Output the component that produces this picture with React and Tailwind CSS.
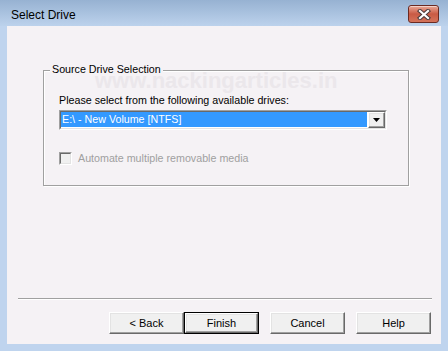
const raised =
  "bg-[#f0f0f0] border border-t-white border-l-white border-b-[#696969] border-r-[#696969] shadow-[inset_-1px_-1px_0_#a0a0a0,inset_1px_1px_0_#e3e3e3]";

function DialogButton({ label, isDefault }) {
  if (isDefault) {
    return (
      <div className="w-[75px] h-[22px] border border-black">
        <button className={`w-full h-full flex items-center justify-center text-[11px] leading-[13px] text-black ${raised}`}>
          {label}
        </button>
      </div>
    );
  }
  return (
    <button className={`w-[75px] h-[22px] flex items-center justify-center text-[11px] leading-[13px] text-black ${raised}`}>
      {label}
    </button>
  );
}

export default function App() {
  return (
    <div className="w-[448px] h-[351px] bg-[#bfd4ee] flex flex-col overflow-hidden font-['Liberation_Sans',Arial,sans-serif]">
      {/* title bar */}
      <div className="h-[26px] shrink-0 bg-gradient-to-b from-[#97b2d2] to-[#bcd2ec] flex items-start justify-between pl-[11px] pr-[9px]">
        <span className="pt-[9px] text-[12px] leading-[12px] text-black">Select Drive</span>
        <button className="mt-[5px] w-[31px] h-[18px] rounded-[3px] border border-[#6b2a22] bg-gradient-to-b from-[#e9a898] via-[#c95a44] to-[#d4735a] shadow-[inset_0_1px_0_rgba(255,255,255,0.5)] flex items-center justify-center">
          <svg width="14" height="11" viewBox="0 0 14 11">
            <path d="M3 2 L11 9 M11 2 L3 9" stroke="#4a3a3a" strokeWidth="4.2" strokeLinecap="square" />
            <path d="M3 2 L11 9 M11 2 L3 9" stroke="#ffffff" strokeWidth="2.2" strokeLinecap="square" />
          </svg>
        </button>
      </div>

      {/* client area */}
      <div className="mx-[7px] h-[318px] shrink-0 bg-[#f5f2f5] relative flex flex-col text-[10.7px] leading-[13px] text-black">
        <div className="absolute left-[88px] top-[48px] text-[22px] leading-[13px] font-bold text-[#ebe7eb] select-none pointer-events-none">
          www.hackingarticles.in
        </div>

        {/* group box */}
        <div className="relative mt-[44px] ml-[36px] w-[366px] h-[116px] border border-[#a0a0a0] shadow-[inset_1px_1px_0_#fff,1px_1px_0_#fff] pl-[15px] pt-[23px]">
          <span className="absolute left-[6px] -top-[8px] px-[2px] bg-[#f5f2f5]">Source Drive Selection</span>
          <div>Please select from the following available drives:</div>

          {/* combo box */}
          <div className="mt-[3px] w-[328px] h-[20px] border border-t-[#a0a0a0] border-l-[#a0a0a0] border-b-white border-r-white">
            <div className="w-full h-full flex bg-white border border-t-[#696969] border-l-[#696969] border-b-[#e3e3e3] border-r-[#e3e3e3]">
              <div className="flex-1 mb-[1px] mr-[1px] bg-[#3399ff] text-white pl-[1px] flex items-center">
                E:\ - New Volume [NTFS]
              </div>
              <div className={`w-[17px] h-full flex items-center justify-center ${raised}`}>
                <svg width="7" height="4" viewBox="0 0 7 4">
                  <path d="M0 0 H7 L3.5 4 Z" fill="#000" />
                </svg>
              </div>
            </div>
          </div>

          {/* checkbox */}
          <div className="mt-[22px] flex items-center gap-[6px]">
            <div className="w-[13px] h-[13px] border border-t-[#a0a0a0] border-l-[#a0a0a0] border-b-white border-r-white">
              <div className="w-full h-full bg-[#f0f0f0] border border-t-[#696969] border-l-[#696969] border-b-[#e3e3e3] border-r-[#e3e3e3]" />
            </div>
            <span className="text-[#a0a0a0]">Automate multiple removable media</span>
          </div>
        </div>

        {/* separator */}
        <div className="mt-[112px] ml-[11px] w-[414px] h-[2px] border-t border-t-[#a0a0a0] border-b border-b-white" />

        {/* buttons */}
        <div className="mt-[12px] flex justify-end pr-[10px]">
          <DialogButton label="< Back" />
          <DialogButton label="Finish" isDefault />
          <div className="w-[11px]" />
          <DialogButton label="Cancel" />
          <div className="w-[11px]" />
          <DialogButton label="Help" />
        </div>
      </div>
    </div>
  );
}
